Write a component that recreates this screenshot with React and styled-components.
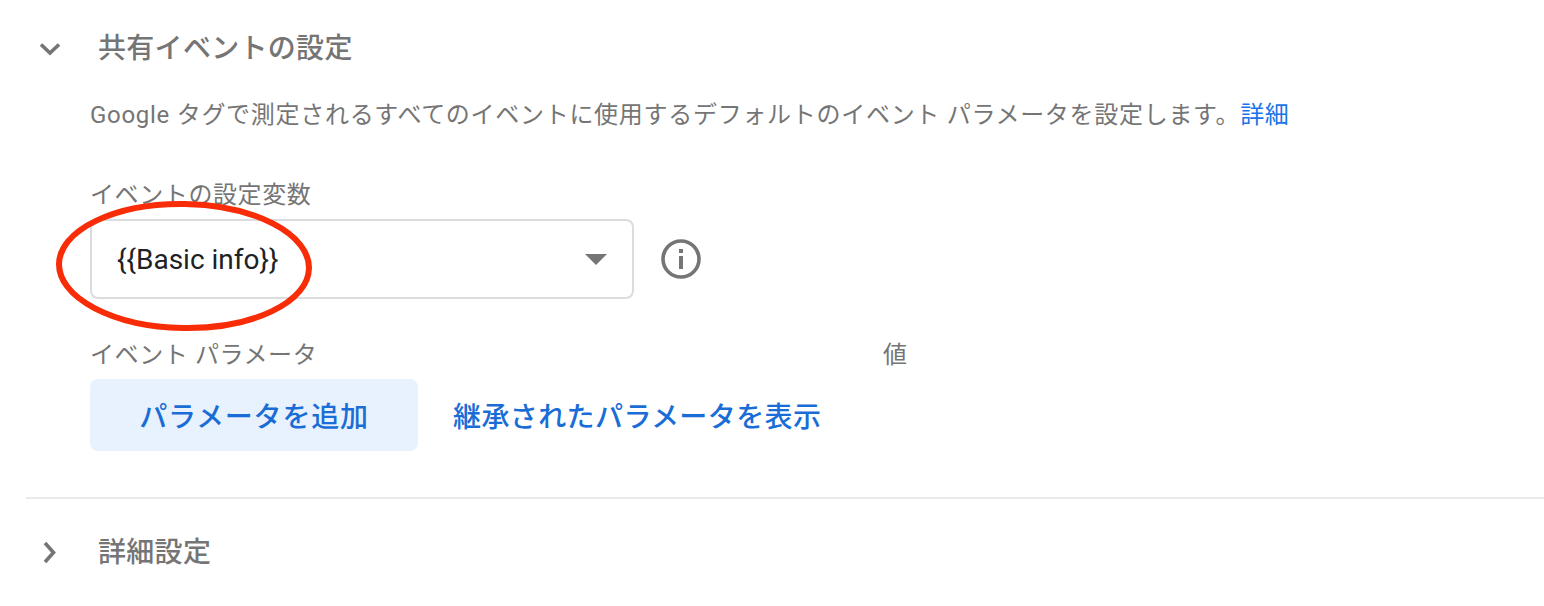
import React from 'react'
import styled, { createGlobalStyle } from 'styled-components'

const GlobalStyle = createGlobalStyle`
  html, body {
    margin: 0;
    padding: 0;
    background: #ffffff;
  }
  body {
    font-family: Roboto, "Noto Sans CJK JP", sans-serif;
  }
`

const Page = styled.div`
  width: 1544px;
  height: 606px;
  overflow: hidden;
  box-sizing: border-box;
  padding: 27px 0 0 26px;
`

const SectionHeader = styled.div`
  display: flex;
  align-items: center;
  height: 44px;
`

const ChevronSlot = styled.div`
  width: 72px;
  padding-left: ${p => (p.$closed ? '9px' : '11px')};
  box-sizing: border-box;
  display: flex;
  align-items: center;
  color: #757575;
`

const SectionTitle = styled.div`
  font-size: 28px;
  line-height: 44px;
  font-weight: 500;
  letter-spacing: 0.3px;
  color: #757575;
`

const Body = styled.div`
  padding-left: 64px;
`

const Description = styled.p`
  margin: 27px 0 0;
  font-size: 24px;
  line-height: 34px;
  letter-spacing: 0.71px;
  color: #757575;
`

const TextLink = styled.a`
  color: ${p => (p.$strong ? '#1a6dd6' : '#1a73e8')};
  font-size: ${p => (p.$strong ? '28px' : 'inherit')};
  font-weight: ${p => (p.$strong ? 500 : 400)};
  letter-spacing: ${p => (p.$strong ? '0.4px' : 'inherit')};
  text-decoration: none;
`

const FieldLabel = styled.div`
  margin-top: 46px;
  font-size: 24px;
  line-height: 34px;
  letter-spacing: 0.6px;
  color: #757575;
`

const FieldRow = styled.div`
  display: flex;
  align-items: center;
  gap: 26px;
  margin-top: 7px;
`

const SelectWrap = styled.div`
  position: relative;
`

const Select = styled.div`
  width: 544px;
  height: 80px;
  box-sizing: border-box;
  display: flex;
  align-items: center;
  justify-content: space-between;
  padding: 0 25px;
  border: 2px solid #dadce0;
  border-radius: 8px;
  background: #fff;
`

const SelectValue = styled.span`
  font-size: 28px;
  color: #202124;
`

const Caret = styled.span`
  width: 0;
  height: 0;
  border-left: 11px solid transparent;
  border-right: 11px solid transparent;
  border-top: 11px solid #757575;
`

const Highlight = styled.svg`
  position: absolute;
  left: -37px;
  top: -22px;
  pointer-events: none;
`

const ParamHeader = styled.div`
  display: flex;
  margin-top: 39px;
  font-size: 24px;
  line-height: 34px;
  letter-spacing: 0.6px;
  color: #757575;
`

const ParamName = styled.div`
  width: 793px;
`

const ActionRow = styled.div`
  display: flex;
  align-items: center;
  gap: 35px;
  margin-top: 7px;
`

const AddButton = styled.button`
  width: 328px;
  height: 72px;
  border: 0;
  border-radius: 8px;
  background: #e8f2fe;
  color: #1a6dd6;
  font-family: inherit;
  font-size: 28px;
  font-weight: 500;
  letter-spacing: 0.8px;
  padding: 0;
`

const Divider = styled.hr`
  margin: 46px 0 0;
  border: 0;
  border-top: 2px solid #e8eaed;
`

const LastHeader = styled(SectionHeader)`
  margin-top: 32px;
`

function Chevron({ down }) {
  return (
    <svg width="28" height="28" viewBox="0 0 28 28" fill="none">
      <path
        d={down ? 'M4 9.5 L13 18 L22 9.5' : 'M10 4 L18.5 13.5 L10 23'}
        stroke="currentColor"
        strokeWidth="3.6"
      />
    </svg>
  )
}

function InfoIcon() {
  return (
    <svg width="42" height="42" viewBox="0 0 42 42" fill="none">
      <circle cx="21" cy="21" r="18" stroke="#757575" strokeWidth="3.6" />
      <rect x="19" y="18" width="4" height="13" fill="#757575" />
      <rect x="19" y="11" width="4" height="4" fill="#757575" />
    </svg>
  )
}

export default function App() {
  return (
    <Page>
      <GlobalStyle />
      <SectionHeader>
        <ChevronSlot>
          <Chevron down />
        </ChevronSlot>
        <SectionTitle>共有イベントの設定</SectionTitle>
      </SectionHeader>
      <Body>
        <Description>
          Google タグで測定されるすべてのイベントに使用するデフォルトのイベント パラメータを設定します。<TextLink>詳細</TextLink>
        </Description>
        <FieldLabel>イベントの設定変数</FieldLabel>
        <FieldRow>
          <SelectWrap>
            <Select>
              <SelectValue>{'{{Basic info}}'}</SelectValue>
              <Caret />
            </Select>
            <Highlight width="264" height="138" viewBox="0 0 264 138" fill="none">
              <ellipse
                cx="131"
                cy="69"
                rx="125"
                ry="62"
                stroke="#f82d08"
                strokeWidth="6"
                transform="rotate(1 131 69)"
              />
            </Highlight>
          </SelectWrap>
          <InfoIcon />
        </FieldRow>
        <ParamHeader>
          <ParamName>イベント パラメータ</ParamName>
          <div>値</div>
        </ParamHeader>
        <ActionRow>
          <AddButton>パラメータを追加</AddButton>
          <TextLink $strong>継承されたパラメータを表示</TextLink>
        </ActionRow>
      </Body>
      <Divider />
      <LastHeader>
        <ChevronSlot $closed>
          <Chevron />
        </ChevronSlot>
        <SectionTitle>詳細設定</SectionTitle>
      </LastHeader>
    </Page>
  )
}
